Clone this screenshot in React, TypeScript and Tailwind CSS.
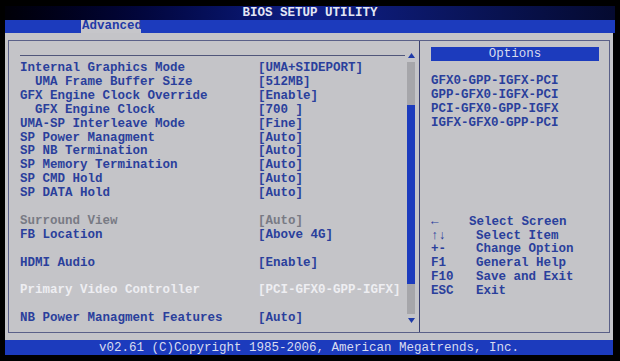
const settings = [
  { label: "Internal Graphics Mode", value: "[UMA+SIDEPORT]" },
  { label: "  UMA Frame Buffer Size", value: "[512MB]" },
  { label: "GFX Engine Clock Override", value: "[Enable]" },
  { label: "  GFX Engine Clock", value: "[700 ]" },
  { label: "UMA-SP Interleave Mode", value: "[Fine]" },
  { label: "SP Power Managment", value: "[Auto]" },
  { label: "SP NB Termination", value: "[Auto]" },
  { label: "SP Memory Termination", value: "[Auto]" },
  { label: "SP CMD Hold", value: "[Auto]" },
  { label: "SP DATA Hold", value: "[Auto]" },
  null,
  { label: "Surround View", value: "[Auto]", tone: "dim" },
  { label: "FB Location", value: "[Above 4G]" },
  null,
  { label: "HDMI Audio", value: "[Enable]" },
  null,
  { label: "Primary Video Controller", value: "[PCI-GFX0-GPP-IGFX]", tone: "hi" },
  null,
  { label: "NB Power Managment Features", value: "[Auto]" },
];

const options = [
  "GFX0-GPP-IGFX-PCI",
  "GPP-GFX0-IGFX-PCI",
  "PCI-GFX0-GPP-IGFX",
  "IGFX-GFX0-GPP-PCI",
];

// key, description, where the description starts
const help = [
  ["←", "Select Screen", "w-[38px]"],
  ["↑↓", "Select Item", "w-[45px]"],
  ["+-", "Change Option", "w-[45px]"],
  ["F1", "General Help", "w-[45px]"],
  ["F10", "Save and Exit", "w-[45px]"],
  ["ESC", "Exit", "w-[45px]"],
];

function Triangle({ up }: { up?: boolean }) {
  return (
    <svg width="7" height="5" viewBox="0 0 7 5">
      <path d={up ? "M0 5L3.5 0L7 5Z" : "M0 0L3.5 5L7 0Z"} fill="#1f3aa8" />
    </svg>
  );
}

export default function App() {
  return (
    <div
      className="w-[620px] h-[361px] bg-black flex flex-col overflow-hidden text-[12.5px] font-bold text-[#2a3f9c] select-none"
      style={{ fontFamily: '"Liberation Mono", "DejaVu Sans Mono", monospace' }}
    >
      {/* Title bar */}
      <div className="h-[20px] pt-[6px] flex-shrink-0">
        <div className="h-[14px] mx-[5px] bg-gradient-to-r from-[#000008] via-[#0f1f8a] to-[#050a30] flex items-center justify-center text-[#e4e6f4] leading-none pt-[1px]">
          BIOS SETUP UTILITY
        </div>
      </div>

      {/* Tabs */}
      <div className="h-[13px] mx-[5px] bg-[#1c3bbd] flex-shrink-0 flex">
        <div className="ml-[76px] w-[60px] h-[13px] bg-[#c6c6ca] text-[#1f3aa8] leading-[13px] pl-[1px]">
          Advanced
        </div>
      </div>

      {/* Main panel */}
      <div className="h-[307px] mx-[5px] mr-[7px] bg-[#c4c4c8] pt-[7px] pl-[3px] pr-[3px] flex-shrink-0">
        <div className="h-[293px] border border-[#5a6088] flex">
          {/* Left panel */}
          <div className="w-[411px] flex border-r border-[#3a4070]">
            <div className="flex-1 pl-[11px]">
              <div className="mt-[14px] mr-[2px] border-t border-[#50567a]" />
              <div className="mt-[6px] leading-[13.9px]">
                {settings.map((s, i) =>
                  s ? (
                    <div
                      key={i}
                      className={
                        "flex whitespace-pre " +
                        (s.tone === "dim"
                          ? "text-[#787a84]"
                          : s.tone === "hi"
                          ? "text-[#eeeef2]"
                          : "")
                      }
                    >
                      <span className="w-[238px]">{s.label}</span>
                      <span>{s.value}</span>
                    </div>
                  ) : (
                    <div key={i} className="h-[13.9px]" />
                  ),
                )}
              </div>
            </div>
            <div className="w-[8px] mr-[4px] flex flex-col items-center">
              <div className="mt-[11px] h-[6px] flex items-center">
                <Triangle up />
              </div>
              <div className="mt-[4px] w-[8px] h-[43px] bg-[#a6a6aa]" />
              <div className="w-[8px] h-[179px] bg-[#1c3bbd]" />
              <div className="w-[8px] h-[30px] bg-[#a6a6aa]" />
              <div className="mt-[3px] h-[6px] flex items-center">
                <Triangle />
              </div>
            </div>
          </div>

          {/* Right panel */}
          <div className="flex-1 pl-[11px] pr-[10px] flex flex-col">
            <div className="mt-[6px] h-[14px] bg-[#1c3bbd] text-[#d8dcf0] font-normal leading-[14px] text-center">
              Options
            </div>
            <div className="mt-[14px] leading-[13.9px]">
              {options.map((o) => (
                <div key={o}>{o}</div>
              ))}
            </div>
            <div className="mt-[85px] leading-[13.9px]">
              {help.map(([k, d, w]) => (
                <div key={k} className="flex whitespace-pre">
                  <span className={w}>{k}</span>
                  <span>{d}</span>
                </div>
              ))}
            </div>
          </div>
        </div>
      </div>

      {/* Footer */}
      <div className="h-[15px] mx-[5px] mr-[7px] bg-[#1c3bbd] flex items-center justify-center text-[#d8dcf0] font-normal leading-none flex-shrink-0 pt-[1px]">
        v02.61 (C)Copyright 1985-2006, American Megatrends, Inc.
      </div>
    </div>
  );
}
